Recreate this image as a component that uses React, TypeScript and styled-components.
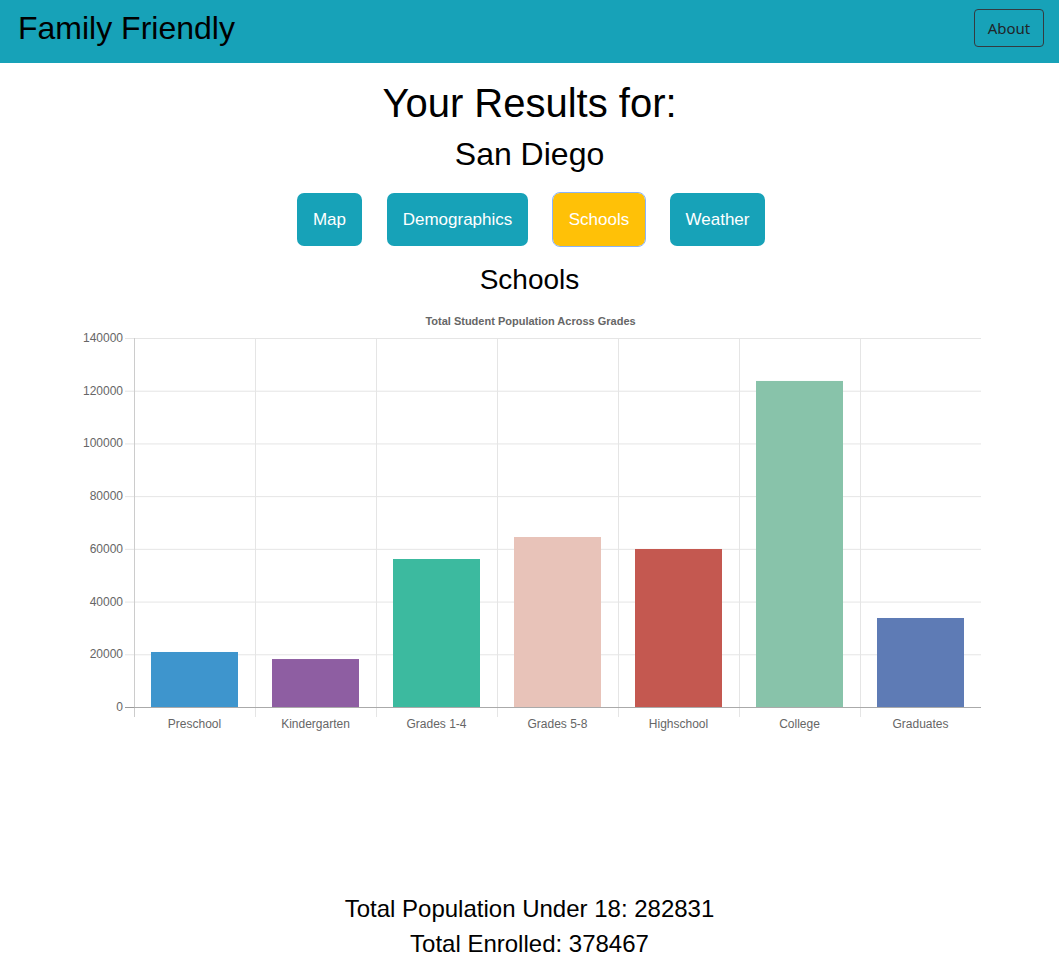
import React from "react";
import styled, { createGlobalStyle } from "styled-components";

const Global = createGlobalStyle`
  html, body { margin: 0; padding: 0; background: #fff; }
  body { font-family: "Liberation Sans", Arial, sans-serif; color: #000; }
  * { box-sizing: border-box; }
`;

const Nav = styled.nav`
  height: 63px;
  background: #17a2b8;
  display: flex;
  align-items: center;
  justify-content: space-between;
  padding: 0 15px 0 18px;
`;

const Brand = styled.div`
  font-size: 32px;
  line-height: 1;
  margin-top: -7px;
`;

const AboutButton = styled.button`
  font-family: "Noto Sans", "Open Sans", sans-serif;
  font-size: 15px;
  color: #212529;
  background: transparent;
  border: 1px solid #343a40;
  border-radius: 4px;
  width: 70px;
  height: 38px;
  padding: 0;
  margin-top: -8px;
`;

const Main = styled.main`
  display: flex;
  flex-direction: column;
  align-items: center;
`;

const Title = styled.h1`
  font-size: 40px;
  font-weight: 400;
  margin: 17px 0 0;
  line-height: 46px;
`;

const City = styled.h2`
  font-size: 32px;
  font-weight: 400;
  margin: 10px 0 0;
  line-height: 37px;
`;

const Tabs = styled.div`
  display: flex;
  gap: 25px;
  margin-top: 20px;
  margin-left: 3px;
`;

const Tab = styled.button<{ $active?: boolean; $w: number }>`
  width: ${(p) => p.$w}px;
  height: 53px;
  border: none;
  border-radius: 7px;
  font-family: "Liberation Sans", Arial, sans-serif;
  font-size: 17px;
  color: #fff;
  background: ${(p) => (p.$active ? "#ffc107" : "#17a2b8")};
  outline: ${(p) => (p.$active ? "1px solid #8ab4f8" : "none")};
  padding: 0;
`;

const Section = styled.h3`
  font-size: 28px;
  font-weight: 400;
  margin: 18px 0 0;
  line-height: 32px;
`;

const ChartWrap = styled.div`
  width: 100%;
  height: 591px;
  margin-top: 4px;
`;

const Stat = styled.p`
  font-size: 24px;
  margin: 0;
  line-height: 35px;
`;

const Stats = styled.div`
  display: flex;
  flex-direction: column;
  align-items: center;
`;

const data = [
  { label: "Preschool", v: 20870, c: "#3e95cd" },
  { label: "Kindergarten", v: 18200, c: "#8e5ea2" },
  { label: "Grades 1-4", v: 56150, c: "#3cba9f" },
  { label: "Grades 5-8", v: 64500, c: "#e8c3b9" },
  { label: "Highschool", v: 59950, c: "#c45850" },
  { label: "College", v: 123700, c: "#88c3aa" },
  { label: "Graduates", v: 33770, c: "#5e7bb5" },
];

function Chart() {
  const top = 38;
  const bottom = 407;
  const left = 134;
  const right = 981;
  const cw = (right - left) / 7;
  const yOf = (v: number) => bottom - (v / 140000) * (bottom - top);
  const ticks = [0, 20000, 40000, 60000, 80000, 100000, 120000, 140000];
  return (
    <svg width="1059" height="591" viewBox="0 0 1059 591">
      <text x={530.5} y={25} textAnchor="middle" fontSize="11" fontWeight="bold" fill="#666" fontFamily="Liberation Sans, Arial, sans-serif">
        Total Student Population Across Grades
      </text>
      {ticks.map((t) => (
        <g key={t}>
          <line x1={left - 9} x2={right} y1={yOf(t) + 0.5} y2={yOf(t) + 0.5} stroke={t === 0 ? "#999" : "#e5e5e5"} strokeWidth={1} />
          <text x={left - 11} y={yOf(t) + 4} textAnchor="end" fontSize="12" fill="#666" fontFamily="Liberation Sans, Arial, sans-serif">
            {t}
          </text>
        </g>
      ))}
      {Array.from({ length: 7 }).map((_, i) => (
        <line key={i} x1={Math.round(left + i * cw) + 0.5} x2={Math.round(left + i * cw) + 0.5} y1={top} y2={bottom + 10} stroke={i === 0 ? "#ccc" : "#e5e5e5"} strokeWidth={1} />
      ))}
      <line x1={left} x2={right} y1={bottom + 0.5} y2={bottom + 0.5} stroke="#aaa" strokeWidth={1} />
      {data.map((d, i) => {
        const x = left + i * cw + 17;
        const y = yOf(d.v);
        return (
          <g key={d.label}>
            <rect x={x} y={y} width={87} height={bottom - y} fill={d.c} />
            <text x={left + i * cw + cw / 2} y={bottom + 21} textAnchor="middle" fontSize="12" fill="#666" fontFamily="Liberation Sans, Arial, sans-serif">
              {d.label}
            </text>
          </g>
        );
      })}
    </svg>
  );
}

export default function App() {
  return (
    <>
      <Global />
      <Nav>
        <Brand>Family Friendly</Brand>
        <AboutButton>About</AboutButton>
      </Nav>
      <Main>
        <Title>Your Results for:</Title>
        <City>San Diego</City>
        <Tabs>
          <Tab $w={65}>Map</Tab>
          <Tab $w={141}>Demographics</Tab>
          <Tab $w={92} $active>Schools</Tab>
          <Tab $w={95}>Weather</Tab>
        </Tabs>
        <Section>Schools</Section>
        <ChartWrap>
          <Chart />
        </ChartWrap>
        <Stats>
          <Stat>Total Population Under 18: 282831</Stat>
          <Stat>Total Enrolled: 378467</Stat>
        </Stats>
      </Main>
    </>
  );
}
